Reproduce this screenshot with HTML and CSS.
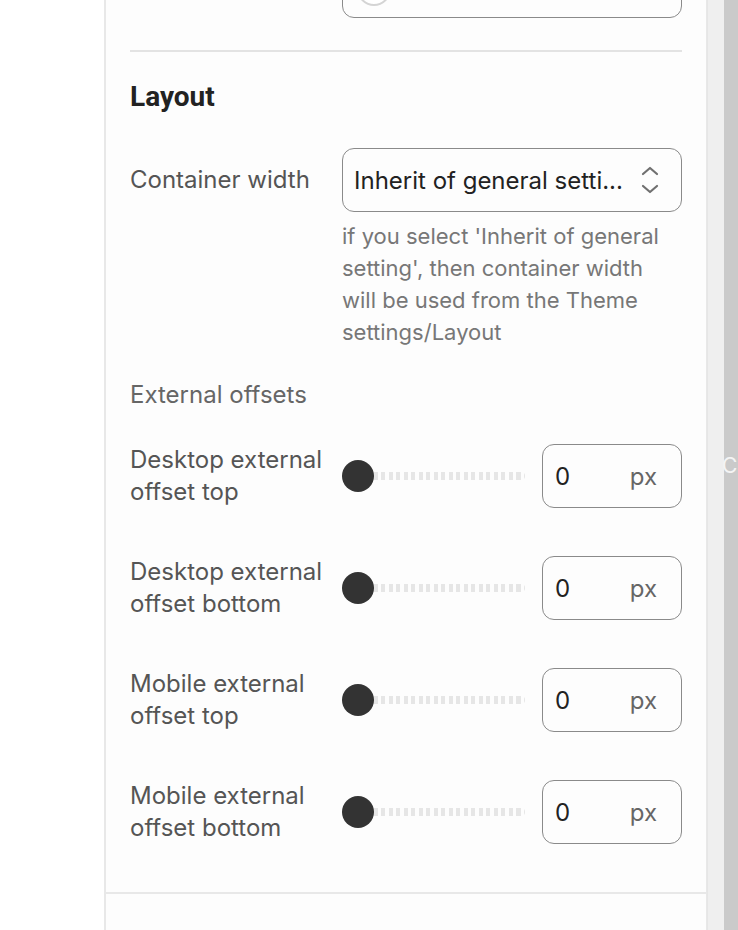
FILE: index.html
```html
<!DOCTYPE html>
<html lang="en">
	<head>
		<meta charset="UTF-8" />
		<meta name="viewport" content="width=device-width, initial-scale=1.0" />
		<title>Section settings</title>
		<link rel="stylesheet" href="styles.css">
	</head>
	<body>
		<div class="gutter"></div>

		<div class="panel">
			<div class="section">
				<div class="toggle-box">
					<span class="toggle-knob"></span>
				</div>

				<hr class="divider" />

				<h2>Layout</h2>

				<div class="field">
					<label class="field-label">Container width</label>
					<div class="field-control">
						<div class="select">
							<span class="select-value">Inherit of general setti...</span>
							<svg class="select-arrows" width="18" height="30" viewBox="0 0 18 30">
								<path d="M2 9 L9 3 L16 9" fill="none" stroke="#707070" stroke-width="2.2" stroke-linecap="round" stroke-linejoin="round" />
								<path d="M2 21 L9 27 L16 21" fill="none" stroke="#707070" stroke-width="2.2" stroke-linecap="round" stroke-linejoin="round" />
							</svg>
						</div>
						<p class="field-help">
							if you select 'Inherit of general setting', then container width
							will be used from the Theme settings/Layout
						</p>
					</div>
				</div>

				<div class="group-title">External offsets</div>

				<div class="offsets">
					<div class="offset-row">
						<label class="field-label">Desktop external offset top</label>
						<div class="range">
							<span class="range-knob"></span>
							<span class="range-track"></span>
						</div>
						<div class="unit-input">
							<span class="unit-value">0</span>
							<span class="unit">px</span>
						</div>
					</div>
					<div class="offset-row">
						<label class="field-label">Desktop external offset bottom</label>
						<div class="range">
							<span class="range-knob"></span>
							<span class="range-track"></span>
						</div>
						<div class="unit-input">
							<span class="unit-value">0</span>
							<span class="unit">px</span>
						</div>
					</div>
					<div class="offset-row">
						<label class="field-label">Mobile external offset top</label>
						<div class="range">
							<span class="range-knob"></span>
							<span class="range-track"></span>
						</div>
						<div class="unit-input">
							<span class="unit-value">0</span>
							<span class="unit">px</span>
						</div>
					</div>
					<div class="offset-row">
						<label class="field-label">Mobile external offset bottom</label>
						<div class="range">
							<span class="range-knob"></span>
							<span class="range-track"></span>
						</div>
						<div class="unit-input">
							<span class="unit-value">0</span>
							<span class="unit">px</span>
						</div>
					</div>
				</div>
			</div>
			<div class="section next"></div>
		</div>

		<div class="scroll-track"></div>
		<div class="scroll-rail">
			<span class="rail-letter">C</span>
		</div>
	</body>
</html>
```

FILE: styles.css
```css
html,
body {
	height: 100%;
}
body {
	margin: 0;
	display: flex;
	overflow: hidden;
	background-color: #ffffff;
	font-family: Inter, "Noto Sans", sans-serif;
	color: #555;
}
.gutter {
	width: 104px;
	flex-shrink: 0;
}
.panel {
	width: 600px;
	flex-shrink: 0;
	background-color: #fdfdfd;
	border-left: 2px solid #e8e8e8;
	border-right: 1px solid #e8e8e8;
	overflow: hidden;
}
.section {
	padding: 0 24px 48px 24px;
	border-bottom: 2px solid #e8e8e8;
}
.section.next {
	border-bottom: none;
	height: 200px;
}
.toggle-box {
	margin: -46px 0 0 212px;
	height: 62px;
	border: 1px solid #8a8a8a;
	border-radius: 12px;
	display: flex;
	align-items: center;
	padding-left: 14px;
	background-color: #fdfdfd;
}
.toggle-knob {
	width: 30px;
	height: 30px;
	border-radius: 50%;
	border: 2px solid #d4d4d4;
	background-color: #fff;
	margin-top: 6px;
}
.divider {
	border: none;
	height: 2px;
	background-color: #e3e3e3;
	margin: 32px 0 0 0;
}
h2 {
	margin: 29px 0 35px 0;
	font-family: Roboto, "Liberation Sans", sans-serif;
	font-weight: 700;
	font-size: 28px;
	line-height: 32px;
	color: #222;
}
.field {
	display: grid;
	grid-template-columns: 212px 1fr;
}
.field-label {
	font-size: 24px;
	line-height: 32px;
	color: #555;
	padding-right: 8px;
}
.field > .field-label {
	padding-top: 16px;
}
.select {
	height: 62px;
	border: 1px solid #8a8a8a;
	border-radius: 12px;
	display: flex;
	align-items: center;
	justify-content: space-between;
	padding: 0 22px 0 11px;
	background-color: #fdfdfd;
}
.select-value {
	font-size: 24px;
	color: #222;
}
.field-help {
	margin: 8px 0 0 0;
	font-size: 22px;
	line-height: 32px;
	color: #777;
}
.group-title {
	margin-top: 31px;
	font-size: 24px;
	line-height: 32px;
	color: #666;
}
.offsets {
	margin-top: 33px;
	display: flex;
	flex-direction: column;
	gap: 48px;
}
.offset-row {
	display: grid;
	grid-template-columns: 212px 183px 1fr;
	align-items: center;
}
.offset-row .field-label {
	align-self: start;
}
.range {
	display: flex;
	align-items: center;
}
.range-knob {
	width: 32px;
	height: 32px;
	border-radius: 50%;
	background-color: #333;
	flex-shrink: 0;
}
.range-track {
	flex: 1;
	height: 8px;
	border-radius: 0 4px 4px 0;
	background-image: repeating-linear-gradient(
		90deg,
		#e6e6e6 0,
		#e6e6e6 4px,
		transparent 4px,
		transparent 7.5px
	);
}
.unit-input {
	margin-left: 17px;
	height: 62px;
	border: 1px solid #8a8a8a;
	border-radius: 12px;
	display: flex;
	align-items: center;
	justify-content: space-between;
	padding: 0 24px 0 12px;
	background-color: #fdfdfd;
}
.unit-value {
	font-size: 24px;
	color: #222;
}
.unit {
	font-size: 24px;
	color: #666;
}
.scroll-track {
	width: 16px;
	flex-shrink: 0;
	background-color: #efefef;
	border-left: 1px solid #e6e6e6;
}
.scroll-rail {
	position: relative;
	flex: 1;
	background-color: #cacaca;
}
.rail-letter {
	position: absolute;
	left: -2px;
	top: 454px;
	font-size: 21px;
	line-height: 24px;
	color: #f4f4f4;
}
```
